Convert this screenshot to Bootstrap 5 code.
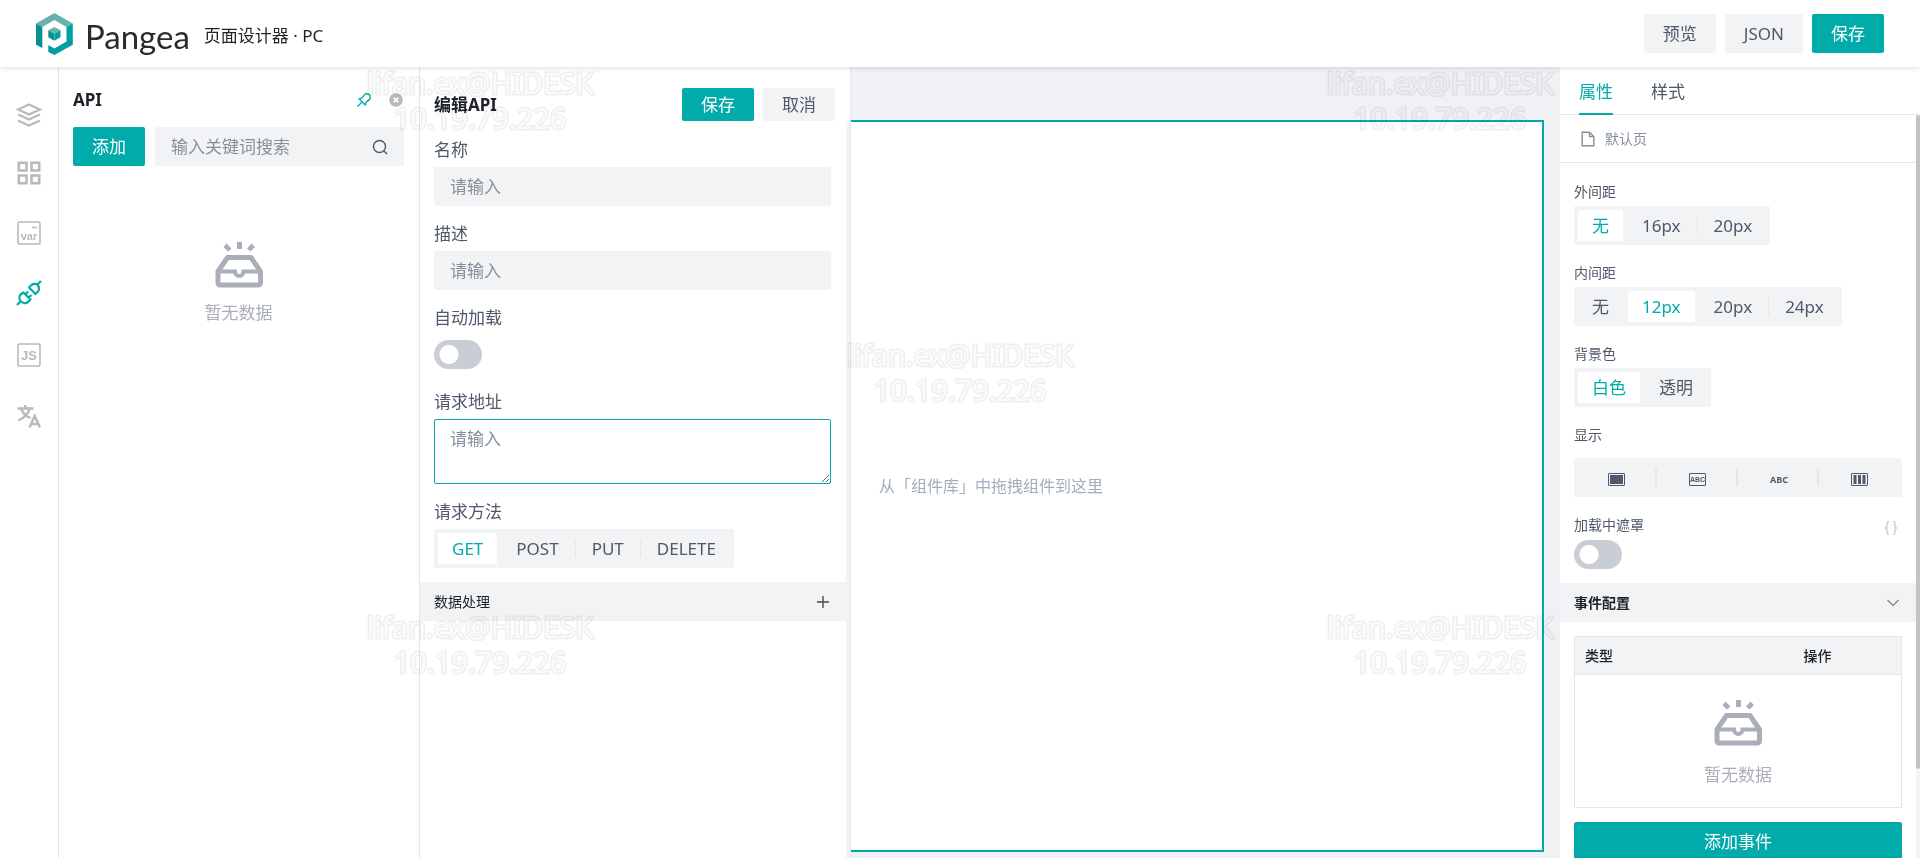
<!DOCTYPE html>
<html lang="zh-CN">
<head>
<meta charset="utf-8">
<meta name="viewport" content="width=device-width, initial-scale=1">
<title>Pangea 页面设计器</title>
<link href="https://cdn.jsdelivr.net/npm/bootstrap@5.3.0/dist/css/bootstrap.min.css" rel="stylesheet">
<style>
:root{--teal:#00aba9;--fill:#f1f3f5;--line:#e5e6eb;--ink:#1d2129;--ink2:#4e5969;--ink3:#86909c}
body{font-family:"Noto Sans","Noto Sans CJK SC",sans-serif;font-size:17px;line-height:26px;font-weight:400;color:var(--ink2);background:#fff}
.topbar{height:67px;padding:0 36px;box-shadow:0 1px 5px rgba(0,0,0,.14);z-index:2}
.brand-name{font-family:Lato,sans-serif;font-size:33px;line-height:40px;font-weight:400;color:#2b2b2b}
.brand-sub{margin-left:14px}
.tool-row{gap:9px}
.btn-tool{--bs-btn-font-size:17px;--bs-btn-line-height:25px;--bs-btn-padding-x:19px;--bs-btn-padding-y:7px;--bs-btn-border-width:0;--bs-btn-border-radius:2px;--bs-btn-color:var(--ink2);--bs-btn-bg:var(--fill);--bs-btn-hover-bg:#e5e6eb}
.btn-teal{--bs-btn-color:#fff;--bs-btn-bg:var(--teal);--bs-btn-hover-color:#fff;--bs-btn-hover-bg:#00bab8}
.btn-short{--bs-btn-padding-y:4px}
.rail{width:59px;border-right:1px solid var(--line);padding-top:18px}
.rail-btn{height:61px;border:0;background:none;padding:0;color:#b9b9b9}
.rail-near{height:58px}
.rail-btn.active{color:var(--teal)}
.plain-btn{border:0;background:none;padding:0;line-height:0;color:inherit}
.pin-btn{color:var(--teal)}
.api-panel{width:361px;padding:20px 15px 20px 14px;border-right:1px solid var(--line)}
.search-row{gap:10px;margin-top:14px}
.panel-title{font-size:17px;line-height:26px;font-weight:700;color:var(--ink);margin:0}
.field{font-size:17px;line-height:25px;padding:7px 16px;border:0;border-radius:2px;background-color:var(--fill)}
.field:focus{background-color:var(--fill);box-shadow:none}
.field::placeholder{color:var(--ink3);opacity:1}
.area{background-color:#fff;border:1px solid var(--teal);height:65px;min-height:65px;padding:6px 15px;resize:vertical}
.empty-state{color:#a9aeb8}
.edit-panel{width:431px;border-right:1px solid var(--line)}
.edit-track{width:4px;top:54px;background:#f4f4f5}
.edit-head{padding:21px 15px 16px 14px}
.edit-form{padding:0 19px 0 14px}
.form-row{margin-bottom:15px}
.form-row-end{margin-bottom:14px}
.form-row .cap{display:block;margin-bottom:4px}
.switch-box{height:39px}
.toggle{width:48px;height:29px;margin:0;border:0;border-radius:15px;appearance:none;background:radial-gradient(circle at 15px 50%,#fff 9px,transparent 10px) #c9cdd4}
.toggle:checked{background:radial-gradient(circle at 33px 50%,#fff 9px,transparent 10px) var(--teal)}
.seg{display:inline-flex;gap:5px;padding:4px;height:39px;background:var(--fill);border-radius:2px}
.seg label{position:relative;padding:0 14px;line-height:31px;border-radius:2px;cursor:pointer}
.seg .btn-check:checked+label{background:#fff;color:var(--teal)}
.seg label.sep::after{content:"";position:absolute;right:-3px;top:7px;height:17px;width:1px;background:var(--line)}
.seg-wide{display:flex;gap:0;padding:4px 2px}
.seg-wide label{flex:1;padding:0;text-align:center}
.seg-wide label.sep::after{right:0;width:2px}
.section-bar{height:39px;padding:0 16px 0 14px;background:var(--fill);font-size:14px;color:var(--ink)}
.canvas{background:#eff1f5;padding:53px 16px 6px 0}
.page-box{border:2px solid var(--teal);border-left:0;background:#fff;padding-left:28px;font-size:16px;color:#a3adbd}
.props{width:360px;font-size:14px;line-height:20px}
.prop-tabs{height:48px;padding-left:19px;gap:38px;border-bottom:1px solid var(--line);font-size:17px}
.prop-tabs a{color:var(--ink2);text-decoration:none;line-height:50px;height:48px}
.prop-tabs a.active{color:var(--teal);border-bottom:2px solid var(--teal)}
.page-row{height:48px;padding-left:21px;gap:10px;border-bottom:1px solid var(--line);color:var(--ink3)}
.prop-form{padding:19px 14px 14px;font-size:14px}
.prop-form .cap{display:block;margin-bottom:4px}
.prop-form .cap-mask{margin-bottom:5px}
.prop-form .seg label{font-size:17px}
.prop-item{margin-bottom:18px}
.prop-item .cap.roomy{margin-bottom:13px}
.event-table{border:1px solid var(--line);margin:0 0 14px;font-size:14px}
.event-table th{background:var(--fill);color:var(--ink);font-weight:500;padding:9px 10px 8px;border-bottom:1px solid var(--line)}
.event-table td{padding:25px 10px 19px;border-bottom:1px solid var(--line)}
.empty-text{font-size:17px;line-height:26px}
.events{padding:14px 14px 0}
.scroll-track{top:48px;width:4px;background:#f5f5f5}
.scroll-thumb{height:88%;background:#c3c3c3;border-radius:2px}
.stamp{font-size:29px;line-height:35px;color:#fbfbfb;-webkit-text-stroke:3px #efefef;paint-order:stroke fill;white-space:nowrap;pointer-events:none;z-index:5;mix-blend-mode:multiply}
</style>
<script src="https://cdn.jsdelivr.net/npm/bootstrap@5.3.0/dist/js/bootstrap.bundle.min.js"></script>
</head>
<body>
<svg width="0" height="0" class="position-absolute" aria-hidden="true">
  <symbol id="tray" viewBox="0 0 50 46">
    <path fill="currentColor" d="M23 0h5v7h-5zM12.500 1.500l5 5-3.500 3-4.500-4.500zM37.500 1.500l3.500 3.500-4.500 4.500-3.500-3z"/>
    <path fill="none" stroke="currentColor" stroke-width="5" stroke-linejoin="round" d="M13.500 15.500h23.500l9.500 14v11.500a2 2 0 0 1-2 2h-38.500a2 2 0 0 1-2-2V29.500z"/>
    <path fill="none" stroke="currentColor" stroke-width="4" d="M4 29.500h17c0 6 8.500 6 8.500 0h17"/>
  </symbol>
</svg>
<div class="vh-100 d-flex flex-column overflow-hidden position-relative">
  <header class="topbar d-flex align-items-center flex-shrink-0 bg-white position-relative">
    <svg width="37" height="42" viewBox="0 0 37 42" aria-hidden="true">
      <path fill="#66b2ad" d="M0 10.500 18.400 0 36.800 10.500 30.500 14 18.400 7 6.300 14z"/>
      <path fill="#079091" d="M0 10.500 6.300 14v21L0 31.700z"/>
      <path fill="#00a0a2" d="M36.800 10.500v21.200L18.400 42 12.300 39v-7l6.100 3.500 12.100-7V14z"/>
      <path fill="#66b2ad" d="M12.300 17.300l6.100-3.400 6.100 3.400-6.100 3.400z"/>
      <path fill="#079091" d="M12.300 17.300l6.100 3.400v7l-6.100-3.400z"/>
      <path fill="#00a0a2" d="M24.500 17.300l-6.100 3.400v7l6.100-3.400z"/>
    </svg>
    <div class="d-flex align-items-center ms-2 ps-1 pt-1">
      <span class="brand-name">Pangea</span>
      <span class="brand-sub text-dark">页面设计器 · PC</span>
    </div>
    <div class="tool-row ms-auto d-flex">
      <button type="button" class="btn btn-tool">预览</button>
      <button type="button" class="btn btn-tool">JSON</button>
      <button type="button" class="btn btn-tool btn-teal">保存</button>
    </div>
  </header>

  <div class="d-flex flex-grow-1 overflow-hidden">
    <nav class="rail d-flex flex-column flex-shrink-0">
      <button class="rail-btn rail-near" aria-label="大纲"><svg width="26" height="26" viewBox="0 0 26 26" fill="none" stroke="currentColor" stroke-width="2.200"><path d="M13 2.500l11 5-11 5-11-5zM2 12.500l11 5L24 12.500M2 18.500l11 5L24 18.500"/></svg></button>
      <button class="rail-btn rail-near" aria-label="组件库"><svg width="24" height="24" viewBox="0 0 24 24" fill="none" stroke="currentColor" stroke-width="2.600"><path d="M1.800 1.800h7.700v7.700h-7.700zM14.500 1.800h7.700v7.700h-7.700zM1.800 14.500h7.700v7.700h-7.700zM14.500 14.500h7.700v7.700h-7.700z"/></svg></button>
      <button class="rail-btn" aria-label="变量"><svg width="24" height="24" viewBox="0 0 24 24"><rect x="1" y="1" width="22" height="22" rx="1.500" fill="none" stroke="currentColor" stroke-width="1.600"/><path d="M15 6.500h5" stroke="currentColor" stroke-width="1.500"/><text x="12" y="18.500" text-anchor="middle" font-family="Liberation Sans" font-weight="700" font-size="11" fill="currentColor">var</text></svg></button>
      <button class="rail-btn active" aria-label="API"><svg width="26" height="26" viewBox="0 0 26 26" fill="none" stroke="currentColor" stroke-width="2.200" stroke-linejoin="round"><path d="M1 25l4-4M25 1l-4 4M7.500 12.500l7 7-2.500 2.500c-2 1.500-5 1.500-7-.5s-2-5-.5-7zM9.500 14.500l2.500-3M12.500 17.500l3-2.500M13 7.500l2.500-2.500c2-1.500 5-1.500 6.500.5s1.500 4 0 6l-2.500 2.500z"/></svg></button>
      <button class="rail-btn" aria-label="脚本"><svg width="24" height="24" viewBox="0 0 24 24"><rect x="1" y="1" width="22" height="22" rx="1.500" fill="none" stroke="currentColor" stroke-width="1.600"/><text x="12" y="17" text-anchor="middle" font-family="Liberation Sans" font-weight="700" font-size="13" fill="currentColor">JS</text></svg></button>
      <button class="rail-btn" aria-label="多语言"><svg width="24" height="24" viewBox="0 0 24 24" fill="none" stroke="currentColor" stroke-width="2.400"><path d="M.5 4.500h16M8.300 1v3.500M12.800 4.500c-1.500 5.500-6 9.500-11.500 12M4.500 5c1 4 5 7.500 9 9M12.500 23.500l5.200-11.500 5.300 11.500M14.500 20h6.500"/></svg></button>
    </nav>

    <aside class="api-panel flex-shrink-0">
      <div class="d-flex align-items-center">
        <h2 class="panel-title me-auto">API</h2>
        <button class="plain-btn pin-btn me-3" aria-label="固定"><svg width="16" height="16" viewBox="0 0 16 16" fill="none" stroke="currentColor" stroke-width="1.400" stroke-linejoin="round"><path d="M1.500 14.500l4-4M3 6.800l6.300 6.300.9-3 4-3.200c.8-3.600-1.500-5.700-5-5l-3 4z"/></svg></button>
        <button class="plain-btn" aria-label="关闭"><svg width="16" height="16" viewBox="0 0 16 16"><circle cx="8" cy="8" r="6.800" fill="#b9b9b9"/><path d="M5.600 5.600l4.800 4.800M10.400 5.600l-4.800 4.800" stroke="#fff" stroke-width="1.700"/></svg></button>
      </div>
      <div class="search-row d-flex">
        <button type="button" class="btn btn-tool btn-teal flex-shrink-0">添加</button>
        <div class="position-relative flex-grow-1">
          <input type="text" class="form-control field" placeholder="输入关键词搜索" aria-label="搜索">
          <svg class="position-absolute top-50 end-0 translate-middle-y me-3" width="16" height="16" viewBox="0 0 16 16" fill="none" stroke="#4e5969" stroke-width="1.400"><circle cx="7.500" cy="7.500" r="6"/><path d="M12 12l3 3"/></svg>
        </div>
      </div>
      <div class="empty-state text-center mt-5 pt-4">
        <svg class="d-block mx-auto mb-2 mt-1" width="50" height="46"><use href="#tray"/></svg>
        <div class="empty-text pt-1">暂无数据</div>
      </div>
    </aside>

    <section class="edit-panel flex-shrink-0 position-relative">
      <div class="edit-head tool-row d-flex align-items-center">
        <h2 class="panel-title me-auto">编辑API</h2>
        <button type="button" class="btn btn-tool btn-teal btn-short">保存</button>
        <button type="button" class="btn btn-tool btn-short">取消</button>
      </div>
      <form class="edit-form">
        <div class="form-row"><label class="cap" for="api-name">名称</label><input id="api-name" class="form-control field" placeholder="请输入"></div>
        <div class="form-row"><label class="cap" for="api-desc">描述</label><input id="api-desc" class="form-control field" placeholder="请输入"></div>
        <div class="form-row"><label class="cap" for="api-auto">自动加载</label><div class="switch-box d-flex align-items-center"><input id="api-auto" type="checkbox" role="switch" class="toggle"></div></div>
        <div class="form-row"><label class="cap" for="api-url">请求地址</label><textarea id="api-url" class="form-control field area" placeholder="请输入"></textarea></div>
        <div class="form-row form-row-end"><span class="cap">请求方法</span>
          <div class="seg" role="radiogroup" aria-label="请求方法">
            <input class="btn-check" type="radio" name="method" id="m1" checked><label for="m1">GET</label>
            <input class="btn-check" type="radio" name="method" id="m2"><label for="m2" class="sep">POST</label>
            <input class="btn-check" type="radio" name="method" id="m3"><label for="m3" class="sep">PUT</label>
            <input class="btn-check" type="radio" name="method" id="m4"><label for="m4">DELETE</label>
          </div>
        </div>
      </form>
      <div class="section-bar d-flex align-items-center justify-content-between me-1">
        <span>数据处理</span>
        <button class="plain-btn" aria-label="新增"><svg width="14" height="14" viewBox="0 0 14 14" stroke="#4a4a4a" stroke-width="1.400"><path d="M1 7h12M7 1v12"/></svg></button>
      </div>
      <div class="edit-track position-absolute end-0 bottom-0"></div>
    </section>

    <main class="canvas flex-grow-1 d-flex">
      <div class="page-box flex-grow-1 d-flex align-items-center">从「组件库」中拖拽组件到这里</div>
    </main>

    <aside class="props flex-shrink-0 position-relative overflow-hidden bg-white">
      <nav class="prop-tabs d-flex"><a href="#" class="active">属性</a><a href="#">样式</a></nav>
      <div class="page-row d-flex align-items-center me-1">
        <svg width="14" height="16" viewBox="0 0 14 16" fill="none" stroke="currentColor" stroke-width="1.400"><path d="M1.200 1.200h7.300l4.300 4.300v9.300H1.200zM8.500 1.200v4.300h4.300"/></svg>
        <span>默认页</span>
      </div>
      <form class="prop-form me-1">
        <div class="prop-item"><span class="cap">外间距</span>
          <div class="seg" role="radiogroup" aria-label="外间距">
            <input class="btn-check" type="radio" name="margin" id="o1" checked><label for="o1">无</label>
            <input class="btn-check" type="radio" name="margin" id="o2"><label for="o2" class="sep">16px</label>
            <input class="btn-check" type="radio" name="margin" id="o3"><label for="o3">20px</label>
          </div></div>
        <div class="prop-item"><span class="cap">内间距</span>
          <div class="seg" role="radiogroup" aria-label="内间距">
            <input class="btn-check" type="radio" name="padding" id="p1"><label for="p1">无</label>
            <input class="btn-check" type="radio" name="padding" id="p2" checked><label for="p2">12px</label>
            <input class="btn-check" type="radio" name="padding" id="p3"><label for="p3" class="sep">20px</label>
            <input class="btn-check" type="radio" name="padding" id="p4"><label for="p4">24px</label>
          </div></div>
        <div class="prop-item"><span class="cap">背景色</span>
          <div class="seg" role="radiogroup" aria-label="背景色">
            <input class="btn-check" type="radio" name="bg" id="b1" checked><label for="b1">白色</label>
            <input class="btn-check" type="radio" name="bg" id="b2"><label for="b2">透明</label>
          </div></div>
        <div class="prop-item"><span class="cap roomy">显示</span>
          <div class="seg seg-wide" role="radiogroup" aria-label="显示">
            <input class="btn-check" type="radio" name="display" id="d1"><label for="d1" class="sep" aria-label="块"><svg width="17" height="13" viewBox="0 0 17 13"><rect x=".5" y=".5" width="16" height="12" rx=".5" fill="none" stroke="#4e5969"/><path fill="#4e5969" d="M2 2h13v9H2z"/></svg></label>
            <input class="btn-check" type="radio" name="display" id="d2"><label for="d2" class="sep" aria-label="行内块"><svg width="17" height="13" viewBox="0 0 17 13"><rect x=".5" y=".5" width="16" height="12" rx=".5" fill="none" stroke="#4e5969"/><text x="8.500" y="9" text-anchor="middle" font-family="Liberation Sans" font-weight="700" font-size="7" fill="#4e5969">ABC</text></svg></label>
            <input class="btn-check" type="radio" name="display" id="d3"><label for="d3" class="sep" aria-label="行内"><svg width="18" height="13" viewBox="0 0 18 13"><text x="9" y="10" text-anchor="middle" font-family="Noto Sans" font-weight="700" font-size="9" fill="#4e5969">ABC</text></svg></label>
            <input class="btn-check" type="radio" name="display" id="d4"><label for="d4" aria-label="弹性"><svg width="17" height="13" viewBox="0 0 17 13"><rect x=".5" y=".5" width="16" height="12" rx=".5" fill="none" stroke="#4e5969"/><path fill="#4e5969" d="M2.500 2h3v9h-3zM7 2h3v9H7zM11.500 2h3v9h-3z"/></svg></label>
          </div></div>
        <div class="d-flex justify-content-between"><label class="cap cap-mask" for="mask">加载中遮罩</label>
          <button type="button" class="plain-btn me-1" aria-label="绑定变量"><svg width="14" height="14" viewBox="0 0 14 14" fill="none" stroke="#c9cdd4" stroke-width="1.400"><path d="M5 .7H4.200Q3 .7 3 2v3Q3 7 1 7q2 0 2 2v3q0 1.300 1.200 1.300H5M9 .7h.8Q11 .7 11 2v3q0 2 2 2-2 0-2 2v3q0 1.300-1.200 1.300H9"/></svg></button></div>
        <input id="mask" type="checkbox" role="switch" class="toggle d-block">
      </form>
      <div class="section-bar d-flex align-items-center justify-content-between me-1">
        <span class="fw-semibold">事件配置</span>
        <svg width="14" height="10" viewBox="0 0 14 10" fill="none" stroke="#8c8c8c" stroke-width="1.400"><path d="M1.500 2l5.500 5.500L12.500 2"/></svg>
      </div>
      <div class="events me-1">
        <table class="table event-table">
          <colgroup><col style="width:67%"><col></colgroup>
          <thead><tr><th>类型</th><th>操作</th></tr></thead>
          <tbody><tr><td colspan="2" class="text-center"><div class="empty-state"><svg class="d-block mx-auto mb-3" width="50" height="46"><use href="#tray"/></svg><div class="empty-text">暂无数据</div></div></td></tr></tbody>
        </table>
        <button type="button" class="btn btn-tool btn-teal w-100">添加事件</button>
      </div>
      <div class="scroll-track position-absolute end-0 bottom-0"><div class="scroll-thumb w-100"></div></div>
    </aside>
  </div>

  <div class="stamp position-absolute text-center translate-middle" style="left:25%;top:100px">lifan.ex@HIDESK<br>10.19.79.226</div>
  <div class="stamp position-absolute text-center translate-middle" style="left:75%;top:100px">lifan.ex@HIDESK<br>10.19.79.226</div>
  <div class="stamp position-absolute text-center translate-middle" style="left:50%;top:372px">lifan.ex@HIDESK<br>10.19.79.226</div>
  <div class="stamp position-absolute text-center translate-middle" style="left:25%;top:644px">lifan.ex@HIDESK<br>10.19.79.226</div>
  <div class="stamp position-absolute text-center translate-middle" style="left:75%;top:644px">lifan.ex@HIDESK<br>10.19.79.226</div>
</div>
</body>
</html>
